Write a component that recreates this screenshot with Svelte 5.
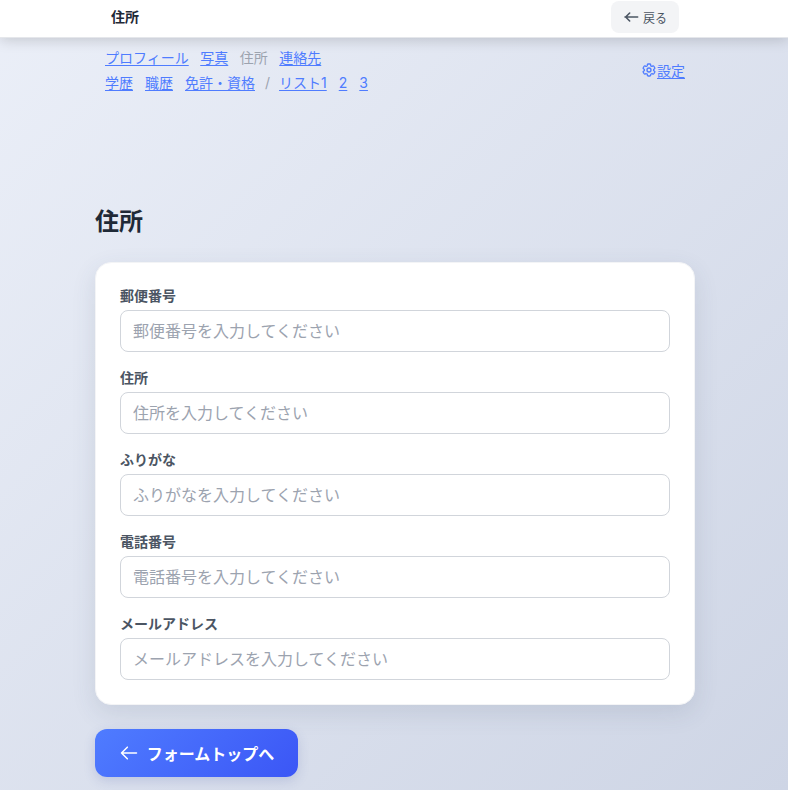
<script>
  const fields = [
    { label: '郵便番号', ph: '郵便番号を入力してください' },
    { label: '住所', ph: '住所を入力してください' },
    { label: 'ふりがな', ph: 'ふりがなを入力してください' },
    { label: '電話番号', ph: '電話番号を入力してください' },
    { label: 'メールアドレス', ph: 'メールアドレスを入力してください' }
  ];
</script>

<div class="page">
  <header class="top">
    <div class="top-inner">
      <span class="top-title">住所</span>
      <button class="back" type="button">
        <svg width="16" height="16" viewBox="0 0 24 24" fill="none" stroke="currentColor" stroke-width="2.4" stroke-linecap="round" stroke-linejoin="round"><path d="M10 18l-6-6 6-6M3 12h19"/></svg>
        <span>戻る</span>
      </button>
    </div>
  </header>

  <div class="subnav">
    <nav class="links">
      <div class="row first">
        <a href="#p">プロフィール</a><a href="#f">写真</a><span class="cur">住所</span><a href="#c">連絡先</a>
      </div>
      <div class="row">
        <a href="#e">学歴</a><a href="#w">職歴</a><a href="#l">免許・資格</a><span class="sep">/</span><a href="#1">リスト1</a><a href="#2">2</a><a href="#3">3</a>
      </div>
    </nav>
    <a class="settings" href="#s">
      <svg width="16" height="16" viewBox="0 0 24 24" fill="none" stroke="currentColor" stroke-width="2" stroke-linecap="round" stroke-linejoin="round"><path d="M9.6 3.9c.1-.5.6-.9 1.1-.9h2.6c.5 0 1 .4 1.1.9l.2 1.3c.1.4.3.7.6.8l.5.3c.3.2.7.2 1 .1l1.2-.5c.5-.2 1.1 0 1.4.5l1.3 2.2c.3.5.2 1.1-.3 1.4l-1 .8c-.3.2-.4.6-.4.9v.6c0 .4.1.7.4.9l1 .8c.5.3.6.9.3 1.4l-1.3 2.2c-.3.5-.9.7-1.4.5l-1.2-.5c-.3-.1-.7-.1-1 .1l-.5.3c-.3.2-.5.5-.6.8l-.2 1.3c-.1.5-.6.9-1.1.9h-2.6c-.5 0-1-.4-1.1-.9l-.2-1.3c-.1-.4-.3-.7-.6-.8l-.5-.3c-.3-.2-.7-.2-1-.1l-1.2.5c-.5.2-1.1 0-1.4-.5l-1.3-2.2c-.3-.5-.2-1.1.3-1.4l1-.8c.3-.2.4-.6.4-.9v-.6c0-.4-.1-.7-.4-.9l-1-.8c-.5-.3-.6-.9-.3-1.4l1.3-2.2c.3-.5.9-.7 1.4-.5l1.2.5c.3.1.7.1 1-.1l.5-.3c.3-.2.5-.5.6-.8z"/><circle cx="12" cy="12" r="3"/></svg><span>設定</span>
    </a>
  </div>

  <main class="main">
    <h1>住所</h1>
    <section class="card">
      {#each fields as f}
        <label class="field">
          <span class="lbl">{f.label}</span>
          <input type="text" placeholder={f.ph} />
        </label>
      {/each}
    </section>
    <button class="cta" type="button">
      <svg width="20" height="20" viewBox="0 0 24 24" fill="none" stroke="currentColor" stroke-width="1.8" stroke-linecap="round" stroke-linejoin="round"><path d="M10 19l-7-7 7-7M3 12h18"/></svg>
      <span>フォームトップへ</span>
    </button>
  </main>
</div>

<style>
  :global(html), :global(body) {
    margin: 0;
    height: 790px;
    overflow: hidden;
  }
  .page {
    height: 790px;
    overflow: hidden;
    background: linear-gradient(135deg, #ebeff8 0%, #ced5e5 100%);
    font-family: Inter, "Noto Sans CJK JP", sans-serif;
    color: #1f2937;
  }
  .top {
    box-sizing: border-box;
    height: 38px;
    background: #fff;
    border-bottom: 1px solid #e5e7eb;
    box-shadow: 0 2px 14px rgba(0, 0, 0, 0.17);
  }
  .top-inner {
    width: 568px;
    margin-left: 111px;
    height: 32px;
    padding-top: 1px;
    display: flex;
    align-items: center;
    justify-content: space-between;
  }
  .top-title {
    font-size: 14px;
    font-weight: 700;
    color: #1f2937;
    padding-bottom: 2px;
  }
  .back {
    width: 68px;
    height: 32px;
    border: 0;
    border-radius: 8px;
    background: #f3f4f6;
    color: #4b5563;
    font: inherit;
    font-size: 12px;
    display: flex;
    align-items: center;
    justify-content: center;
    gap: 4px;
    padding: 0;
  }
  .subnav {
    height: 64px;
    padding: 0 103px 0 105px;
    display: flex;
    align-items: center;
    justify-content: space-between;
  }
  .links {
    display: flex;
    flex-direction: column;
    gap: 4px;
    font-size: 14px;
    line-height: 21px;
  }
  .row {
    display: flex;
    gap: 12px;
  }
  .row.first {
    gap: 11.5px;
  }
  a {
    color: #4f7cff;
    text-decoration: underline;
    text-underline-offset: 2px;
  }
  .cur, .sep {
    color: #9ca3af;
  }
  .sep {
    margin: 0 -3px 0 -2px;
  }
  .settings {
    display: flex;
    align-items: center;
    font-size: 14px;
    line-height: 21px;
  }
  .main {
    margin-left: 95px;
    width: 600px;
  }
  h1 {
    margin: 0;
    padding-top: 102px;
    font-size: 24px;
    line-height: 36px;
    font-weight: 700;
    color: #1f2937;
  }
  .card {
    margin-top: 22px;
    box-sizing: border-box;
    height: 443px;
    padding: 23px 25px;
    background: #fff;
    border: 1px solid #f3f4f6;
    border-radius: 16px;
    box-shadow: 0 8px 24px rgba(60, 70, 100, 0.12);
    display: flex;
    flex-direction: column;
    gap: 16px;
  }
  .field {
    display: flex;
    flex-direction: column;
    gap: 4px;
  }
  .lbl {
    font-size: 14px;
    line-height: 20px;
    height: 20px;
    font-weight: 700;
    color: #4b5563;
    margin-left: -1px;
  }
  input {
    box-sizing: border-box;
    height: 42px;
    width: 550px;
    margin-left: -1px;
    border: 1px solid #d1d5db;
    border-radius: 8px;
    padding: 0 12px;
    background: #fff;
    font: inherit;
    font-size: 16px;
    outline: none;
  }
  input::placeholder {
    color: #9ca3af;
    opacity: 1;
  }
  .cta {
    margin-top: 24px;
    width: 203px;
    height: 48px;
    border: 0;
    border-radius: 12px;
    background: linear-gradient(135deg, #4f7cff 0%, #3b56f6 100%);
    box-shadow: 0 4px 12px rgba(60, 80, 160, 0.18);
    color: #fff;
    font: inherit;
    font-size: 16px;
    font-weight: 700;
    display: flex;
    align-items: center;
    justify-content: center;
    gap: 8px;
    padding: 0;
  }
</style>
